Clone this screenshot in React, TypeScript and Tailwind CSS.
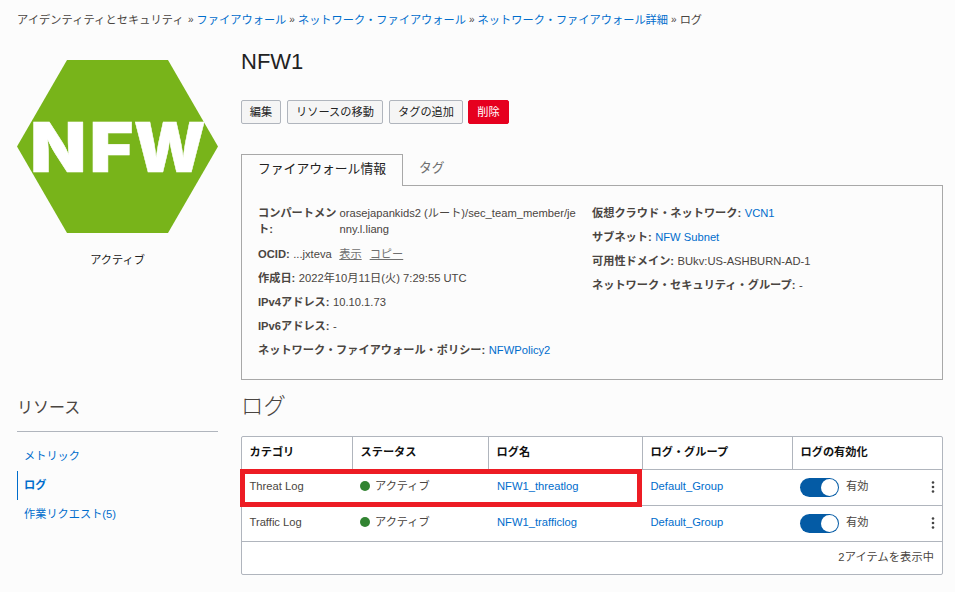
import type { ReactNode } from "react";

const crumbs = [
  { label: "ファイアウォール", link: true },
  { label: "ネットワーク・ファイアウォール", link: true },
  { label: "ネットワーク・ファイアウォール詳細", link: true },
  { label: "ログ", link: false },
];

const rows = [
  { category: "Threat Log", name: "NFW1_threatlog", group: "Default_Group" },
  { category: "Traffic Log", name: "NFW1_trafficlog", group: "Default_Group" },
];

const emblem = [
  { letter: "N", x: 13.2, width: 56 },
  { letter: "F", x: 72.5, width: 44 },
  { letter: "W", x: 116.8, width: 72 },
];

function Link({ children }: { children: ReactNode }) {
  return <a className="text-[#006dcc]">{children}</a>;
}

function Field({ label, children }: { label: string; children: ReactNode }) {
  return (
    <div className="flex h-6 items-start gap-[3.5px] whitespace-nowrap">
      <span className="font-bold">{label}</span>
      <span>{children}</span>
    </div>
  );
}

function Button({ className, children }: { className: string; children: ReactNode }) {
  return (
    <button className={`flex h-6 items-center justify-center rounded-xs border whitespace-nowrap ${className}`}>
      {children}
    </button>
  );
}

function Sidebar() {
  return (
    <aside className="w-[201px] shrink-0">
      <svg className="mt-[21px] block" width="201" height="174" viewBox="0 0 201 174">
        <polygon points="50,0 151,0 201,86.5 151,173 50,173 0,86.5" fill="#78b41a" />
        {emblem.map((e) => (
          <text
            key={e.letter}
            x={e.x}
            y="112"
            textLength={e.width}
            lengthAdjust="spacingAndGlyphs"
            fill="#fff"
            stroke="#fff"
            strokeWidth="0.5"
            fontSize="69"
            fontWeight="900"
            fontFamily="Inter, 'Liberation Sans', sans-serif"
          >
            {e.letter}
          </text>
        ))}
      </svg>
      <div className="mt-[18px] h-4 text-center text-[#222]">アクティブ</div>
      <h2 className="mt-[129px] h-[35px] border-b border-[#b0b5bd] pt-px text-[16px] leading-[20px]">リソース</h2>
      <ul className="mt-[10px] *:h-[29px] *:pt-[6px]">
        <li className="pl-[7px]"><Link>メトリック</Link></li>
        <li className="border-l border-[#006dcc] pl-[6px] font-bold"><Link>ログ</Link></li>
        <li className="pl-[7px]"><Link>作業リクエスト(5)</Link></li>
      </ul>
    </aside>
  );
}

function InfoPanel() {
  return (
    <section className="mt-[30px]">
      <div className="flex">
        <div className="relative z-10 -mb-px h-8 w-[162px] border border-b-0 border-[#a8a8a8] bg-[#fcfcfc] pt-[6px] pl-4 text-[12.8px] text-[#222]">
          ファイアウォール情報
        </div>
        <div className="flex h-7 items-center pl-4 text-[12.8px] text-[#707070]">タグ</div>
      </div>
      <div className="flex h-[195px] border border-[#a8a8a8] pt-[19px] pl-4">
        <div className="w-[334px]">
          <div className="flex h-[41px] gap-[2.5px]">
            <span className="w-[79px] font-bold break-all">コンパートメント:</span>
            <span className="w-[238px] break-all">orasejapankids2 (ルート)/sec_team_member/jenny.l.liang</span>
          </div>
          <Field label="OCID:">
            ...jxteva
            <a className="ml-[7.5px] text-[#707070] underline">表示</a>
            <a className="ml-2 text-[#707070] underline">コピー</a>
          </Field>
          <Field label="作成日:">2022年10月11日(火) 7:29:55 UTC</Field>
          <Field label="IPv4アドレス:">10.10.1.73</Field>
          <Field label="IPv6アドレス:">-</Field>
          <Field label="ネットワーク・ファイアウォール・ポリシー:"><Link>NFWPolicy2</Link></Field>
        </div>
        <div>
          <Field label="仮想クラウド・ネットワーク:"><Link>VCN1</Link></Field>
          <Field label="サブネット:"><Link>NFW Subnet</Link></Field>
          <Field label="可用性ドメイン:">BUkv:US-ASHBURN-AD-1</Field>
          <Field label="ネットワーク・セキュリティ・グループ:">-</Field>
        </div>
      </div>
    </section>
  );
}

const columns = "grid grid-cols-[111px_136px_154px_150px_149px]";

function LogTable() {
  return (
    <div className="relative mt-[18px] h-[139px] rounded-xs border border-[#b0b5bd] bg-white">
      <div className={`${columns} h-[33px] border-b border-[#b0b5bd] font-bold text-[#111] *:border-r *:border-[#b0b5bd] *:pt-[7px] *:pl-[7.5px] *:last:border-r-0`}>
        <div>カテゴリ</div>
        <div>ステータス</div>
        <div>ログ名</div>
        <div>ログ・グループ</div>
        <div>ログの有効化</div>
      </div>
      {rows.map((row) => (
        <div key={row.name} className={`${columns} h-9 border-b border-[#b0b5bd] *:flex *:items-center *:pb-[3px] *:pl-[7.5px]`}>
          <div>{row.category}</div>
          <div>
            <span className="-ml-[0.5px] mr-[5px] size-[10px] rounded-full bg-[#328432]" />
            アクティブ
          </div>
          <div className="translate-x-[0.5px]"><Link>{row.name}</Link></div>
          <div><Link>{row.group}</Link></div>
          <div>
            <span className="mt-[3px] -ml-[0.5px] flex h-[19px] w-[39px] items-center justify-end rounded-full bg-[#045ba5] pr-px">
              <span className="size-[17px] rounded-full bg-white" />
            </span>
            <span className="ml-[7px]">有効</span>
            <svg className="mt-[2px] mr-[7px] ml-auto" width="4" height="12" viewBox="0 0 4 12" fill="#444">
              <circle cx="2" cy="1.5" r="1.3" />
              <circle cx="2" cy="6" r="1.3" />
              <circle cx="2" cy="10.5" r="1.3" />
            </svg>
          </div>
        </div>
      ))}
      <div className="h-8 pt-[7px] pr-2 text-right tracking-[0.12px]">2アイテムを表示中</div>
      <div className="absolute top-8 -left-0.5 h-[38px] w-[402px] border-[5px] border-[#ed1c24]" />
    </div>
  );
}

export default function App() {
  return (
    <div className="h-[592px] w-[955px] overflow-hidden bg-[#fcfcfc] pl-[17px] font-['Liberation_Sans','Noto_Sans_CJK_JP',sans-serif] text-[11.2px] leading-4 text-[#4a4541]">
      <nav className="flex h-[39px] items-center gap-[3px] pt-px tracking-[0.03px] whitespace-nowrap">
        <span className="w-[168px] tracking-[0.1px]">アイデンティティとセキュリティ</span>
        {crumbs.map((c) => (
          <span key={c.label} className="flex gap-[3px]">
            <span className="text-[10px]">»</span>
            {c.link ? <Link>{c.label}</Link> : <span>{c.label}</span>}
          </span>
        ))}
      </nav>
      <div className="flex gap-[23px]">
        <Sidebar />
        <main className="w-[702px]">
          <h1 className="mt-[7px] h-8 text-[22px] leading-8 text-[#222]">NFW1</h1>
          <div className="mt-[22px] flex gap-[6px] text-[#222]">
            <Button className="w-10 border-[#b0b5bd] bg-[#f5f5f5]">編集</Button>
            <Button className="w-24 border-[#b0b5bd] bg-[#f5f5f5]">リソースの移動</Button>
            <Button className="w-[74px] border-[#b0b5bd] bg-[#f5f5f5]">タグの追加</Button>
            <Button className="-ml-px w-[41px] border-[#e6001f] bg-[#e6001f] text-white">削除</Button>
          </div>
          <InfoPanel />
          <h2 className="mt-[10px] h-7 pt-px text-[22.4px] leading-8 font-light">ログ</h2>
          <LogTable />
        </main>
      </div>
    </div>
  );
}
